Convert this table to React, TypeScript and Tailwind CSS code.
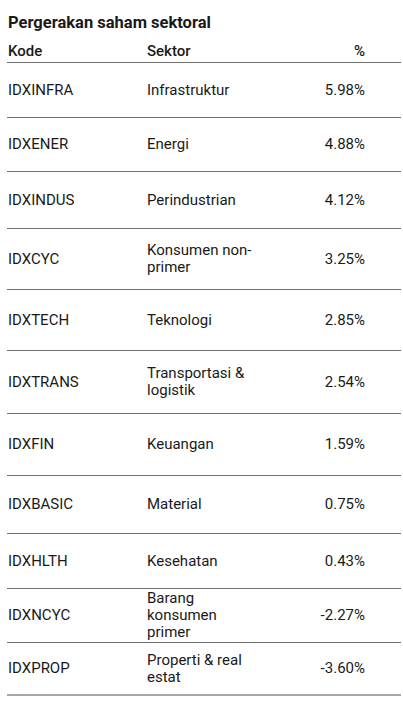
const rows = [
  { kode: "IDXINFRA", sektor: ["Infrastruktur"], pct: "5.98%", h: "h-[55px]" },
  { kode: "IDXENER", sektor: ["Energi"], pct: "4.88%", h: "h-[54px]" },
  { kode: "IDXINDUS", sektor: ["Perindustrian"], pct: "4.12%", h: "h-[57px]" },
  { kode: "IDXCYC", sektor: ["Konsumen non-", "primer"], pct: "3.25%", h: "h-[61px]" },
  { kode: "IDXTECH", sektor: ["Teknologi"], pct: "2.85%", h: "h-[61px]" },
  { kode: "IDXTRANS", sektor: ["Transportasi &", "logistik"], pct: "2.54%", h: "h-[63px]" },
  { kode: "IDXFIN", sektor: ["Keuangan"], pct: "1.59%", h: "h-[62px]" },
  { kode: "IDXBASIC", sektor: ["Material"], pct: "0.75%", h: "h-[58px]" },
  { kode: "IDXHLTH", sektor: ["Kesehatan"], pct: "0.43%", h: "h-[55px]" },
  { kode: "IDXNCYC", sektor: ["Barang", "konsumen", "primer"], pct: "-2.27%", h: "h-[54px]" },
  { kode: "IDXPROP", sektor: ["Properti & real", "estat"], pct: "-3.60%", h: "h-[53px]" },
];

export default function App() {
  return (
    <div
      className="min-h-screen w-full bg-white pl-[7px] pr-[2px] text-[#1a1a1a]"
      style={{ fontFamily: "Roboto, 'Liberation Sans', sans-serif" }}
    >
      {/* Title */}
      <div className="pl-[1px] pt-[12px] text-[16.5px] font-bold leading-[22px]">
        Pergerakan saham sektoral
      </div>

      {/* Header */}
      <div className="flex items-end border-b border-[#707070] pb-[1px] pt-[7px] text-[15px] font-medium leading-[20px]">
        <div className="w-[140px] pl-[1px]">Kode</div>
        <div className="flex-1">Sektor</div>
        <div className="pr-[36px] text-right">%</div>
      </div>

      {/* Rows */}
      {rows.map((r, i) => (
        <div
          key={r.kode}
          className={`${r.h} flex items-center text-[15px] leading-[17px] ${
            i === rows.length - 1 ? "border-b-2 border-[#a8a8a8]" : "border-b border-[#707070]"
          }`}
        >
          <div className="w-[140px] pl-[1px]">{r.kode}</div>
          <div className="flex flex-1 flex-col">
            {r.sektor.map((s) => (
              <span key={s}>{s}</span>
            ))}
          </div>
          <div className="pr-[36px] text-right">{r.pct}</div>
        </div>
      ))}
    </div>
  );
}
